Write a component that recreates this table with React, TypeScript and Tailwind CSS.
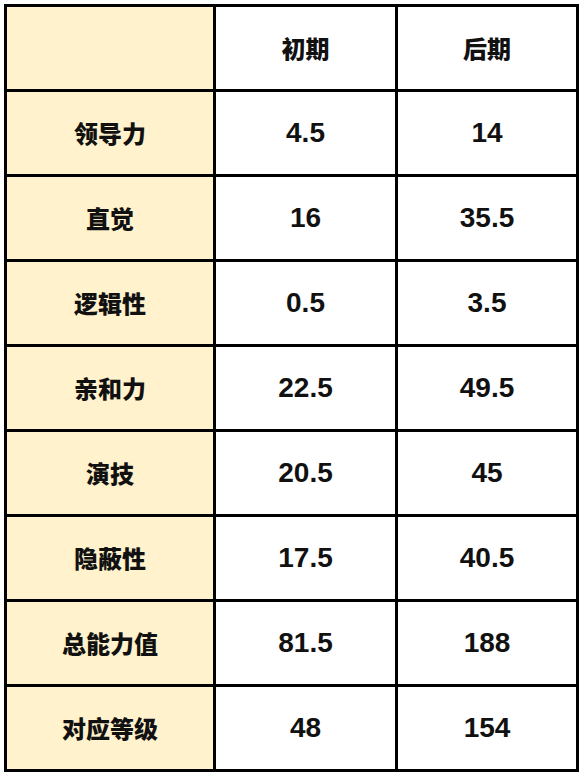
import { Fragment } from "react";

const rows: [string, string, string][] = [
  ["领导力", "4.5", "14"],
  ["直觉", "16", "35.5"],
  ["逻辑性", "0.5", "3.5"],
  ["亲和力", "22.5", "49.5"],
  ["演技", "20.5", "45"],
  ["隐蔽性", "17.5", "40.5"],
  ["总能力值", "81.5", "188"],
  ["对应等级", "48", "154"],
];

const cjk = "font-['Noto_Sans_CJK_SC',sans-serif] font-black text-[24px]";
const num = "font-['Liberation_Sans',Arial,sans-serif] font-bold text-[28px]";

export default function App() {
  return (
    <div className="w-[580px] h-[773px] bg-white p-[4px] text-[#111]">
      <div className="grid grid-cols-[206px_179px_178px] auto-rows-[82px] gap-[3px] bg-black p-[3px] w-[575px]">
        {/* Header */}
        <div className="bg-[#fff2cc]" />
        <div className={`bg-white flex items-center justify-center ${cjk}`}>初期</div>
        <div className={`bg-white flex items-center justify-center ${cjk}`}>后期</div>

        {rows.map(([label, early, late]) => (
          <Fragment key={label}>
            <div className={`bg-[#fff2cc] flex items-center justify-center ${cjk}`}>{label}</div>
            <div className={`bg-white flex items-center justify-center ${num}`}>{early}</div>
            <div className={`bg-white flex items-center justify-center ${num}`}>{late}</div>
          </Fragment>
        ))}
      </div>
    </div>
  );
}
